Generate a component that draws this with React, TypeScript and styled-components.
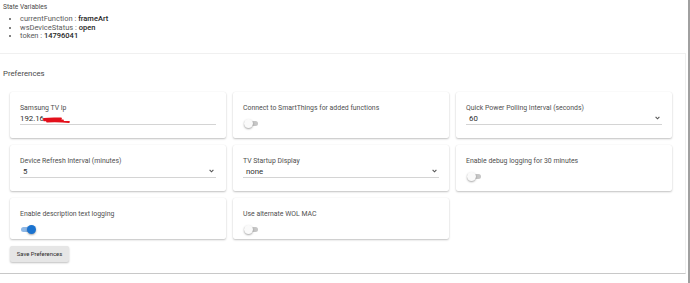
import React from 'react';
import styled, { createGlobalStyle } from 'styled-components';

const GlobalStyle = createGlobalStyle`
  html, body {
    margin: 0;
    padding: 0;
    background: #fff;
    font-family: Roboto, "Liberation Sans", Arial, sans-serif;
  }
`;

const Page = styled.div`
  width: 688px;
  height: 283px;
  border-right: 2px solid #a0a0a0;
  display: flex;
  flex-direction: column;
  overflow: hidden;
`;

const StateSection = styled.section`
  height: 53px;
  padding: 2.5px 0 0 3px;
  box-sizing: border-box;
`;

const SectionTitle = styled.div<{ $size: number }>`
  font-size: ${(p) => p.$size}px;
  line-height: 9px;
  color: #484848;
`;

const VarList = styled.ul`
  margin: 3.5px 0 0;
  padding-left: 17px;
  font-size: 7.5px;
  line-height: 8.5px;
  color: #5a5a5a;
`;

const VarValue = styled.span`
  color: #1e1e1e;
  font-weight: 500;
`;

const PrefSection = styled.section`
  width: 686px;
  height: 221px;
  box-sizing: border-box;
  border-top: 1px solid #f0f0f0;
  border-right: 1px solid #f0f0f0;
  border-bottom: 1px solid #c8c8c8;
  padding: 15px 0 0 3px;
`;

const Grid = styled.div`
  display: grid;
  grid-template-columns: repeat(3, 216px);
  column-gap: 7px;
  row-gap: 7px;
  margin: 14px 0 0 7px;
`;

const Card = styled.div<{ $h: number }>`
  height: ${(p) => p.$h}px;
  box-sizing: border-box;
  background: #fff;
  border-radius: 2px;
  box-shadow: 0 1px 2px rgba(0, 0, 0, 0.24), 0 0 1px rgba(0, 0, 0, 0.08);
  padding: 12px 10px 0 10px;
  display: flex;
  flex-direction: column;
`;

const Label = styled.div`
  font-size: 6.9px;
  line-height: 8px;
  color: #4f4f4f;
`;

const Field = styled.div<{ $indent?: number }>`
  display: flex;
  align-items: center;
  justify-content: space-between;
  height: 12px;
  padding: 0 2px 0 ${(p) => p.$indent ?? 0}px;
  border-bottom: 1px solid #d4d4d4;
  font-size: 7.8px;
  color: #2e2e2e;
`;

const IpValue = styled.span`
  display: flex;
  align-items: center;
`;

const Scribble = styled.svg`
  margin-left: -1px;
  margin-top: 3px;
`;

const Track = styled.div<{ $on?: boolean }>`
  margin-top: 8.5px;
  margin-left: 1px;
  width: 14px;
  height: 5px;
  border-radius: 3px;
  background: ${(p) => (p.$on ? '#8fb8e6' : '#c6c6c6')};
  position: relative;
`;

const Thumb = styled.div<{ $on?: boolean }>`
  position: absolute;
  top: -2px;
  left: ${(p) => (p.$on ? '6px' : '0')};
  width: 9px;
  height: 9px;
  border-radius: 50%;
  background: ${(p) => (p.$on ? '#1a73d0' : '#fafafa')};
  box-shadow: 0 1px 2px rgba(0, 0, 0, 0.35);
`;

const SaveButton = styled.button`
  margin: 7px 0 0 7px;
  width: 59px;
  height: 16px;
  padding: 0;
  border: none;
  border-radius: 2px;
  background: #e6e6e6;
  box-shadow: 0 1px 2px rgba(0, 0, 0, 0.25);
  font-family: inherit;
  font-size: 5.9px;
  color: #2a2a2a;
`;

function Chevron() {
  return (
    <svg width="5" height="4" viewBox="0 0 5 4">
      <path d="M0.6 0.8 L2.5 2.8 L4.4 0.8" fill="none" stroke="#555" strokeWidth="1.1" />
    </svg>
  );
}

function Toggle({ on }: { on?: boolean }) {
  return (
    <Track $on={on}>
      <Thumb $on={on} />
    </Track>
  );
}

function SelectField({ value }: { value: string }) {
  return (
    <Field $indent={3}>
      <span>{value}</span>
      <Chevron />
    </Field>
  );
}

export default function App() {
  return (
    <Page>
      <GlobalStyle />
      <StateSection>
        <SectionTitle $size={6.6}>State Variables</SectionTitle>
        <VarList>
          <li>currentFunction : <VarValue>frameArt</VarValue></li>
          <li>wsDeviceStatus : <VarValue>open</VarValue></li>
          <li>token : <VarValue>14796041</VarValue></li>
        </VarList>
      </StateSection>
      <PrefSection>
        <SectionTitle $size={7.8}>Preferences</SectionTitle>
        <Grid>
          <Card $h={46}>
            <Label>Samsung TV Ip</Label>
            <Field>
              <IpValue>
                192.16
                <Scribble width="27" height="6" viewBox="0 0 27 6">
                  <path d="M1 2 C7 1 13 1.2 18 1.5 M1 3.3 C8 2.8 15 2.8 20 3.3 M4 4.5 C12 4.2 20 4.4 26 5" fill="none" stroke="#e3101b" strokeWidth="1.8" strokeLinecap="round" />
                </Scribble>
              </IpValue>
            </Field>
          </Card>
          <Card $h={46}>
            <Label>Connect to SmartThings for added functions</Label>
            <Toggle />
          </Card>
          <Card $h={46}>
            <Label>Quick Power Polling Interval (seconds)</Label>
            <SelectField value="60" />
          </Card>
          <Card $h={46}>
            <Label>Device Refresh Interval (minutes)</Label>
            <SelectField value="5" />
          </Card>
          <Card $h={46}>
            <Label>TV Startup Display</Label>
            <SelectField value="none" />
          </Card>
          <Card $h={46}>
            <Label>Enable debug logging for 30 minutes</Label>
            <Toggle />
          </Card>
          <Card $h={41}>
            <Label>Enable description text logging</Label>
            <Toggle on />
          </Card>
          <Card $h={41}>
            <Label>Use alternate WOL MAC</Label>
            <Toggle />
          </Card>
        </Grid>
        <SaveButton>Save Preferences</SaveButton>
      </PrefSection>
    </Page>
  );
}
